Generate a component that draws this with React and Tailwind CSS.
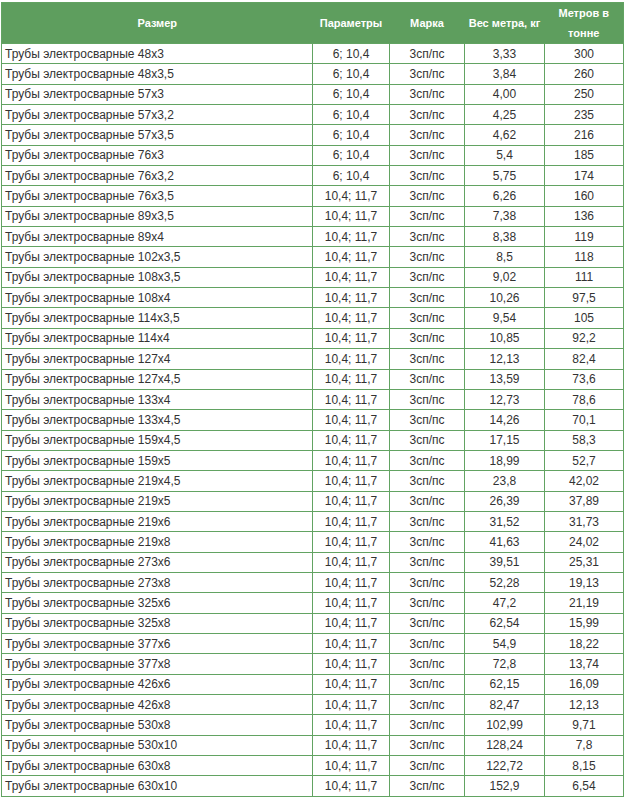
const rows = [
  ["48x3", "6; 10,4", "3,33", "300"],
  ["48x3,5", "6; 10,4", "3,84", "260"],
  ["57x3", "6; 10,4", "4,00", "250"],
  ["57x3,2", "6; 10,4", "4,25", "235"],
  ["57x3,5", "6; 10,4", "4,62", "216"],
  ["76x3", "6; 10,4", "5,4", "185"],
  ["76x3,2", "6; 10,4", "5,75", "174"],
  ["76x3,5", "10,4; 11,7", "6,26", "160"],
  ["89x3,5", "10,4; 11,7", "7,38", "136"],
  ["89x4", "10,4; 11,7", "8,38", "119"],
  ["102x3,5", "10,4; 11,7", "8,5", "118"],
  ["108x3,5", "10,4; 11,7", "9,02", "111"],
  ["108x4", "10,4; 11,7", "10,26", "97,5"],
  ["114x3,5", "10,4; 11,7", "9,54", "105"],
  ["114x4", "10,4; 11,7", "10,85", "92,2"],
  ["127x4", "10,4; 11,7", "12,13", "82,4"],
  ["127x4,5", "10,4; 11,7", "13,59", "73,6"],
  ["133x4", "10,4; 11,7", "12,73", "78,6"],
  ["133x4,5", "10,4; 11,7", "14,26", "70,1"],
  ["159x4,5", "10,4; 11,7", "17,15", "58,3"],
  ["159x5", "10,4; 11,7", "18,99", "52,7"],
  ["219x4,5", "10,4; 11,7", "23,8", "42,02"],
  ["219x5", "10,4; 11,7", "26,39", "37,89"],
  ["219x6", "10,4; 11,7", "31,52", "31,73"],
  ["219x8", "10,4; 11,7", "41,63", "24,02"],
  ["273x6", "10,4; 11,7", "39,51", "25,31"],
  ["273x8", "10,4; 11,7", "52,28", "19,13"],
  ["325x6", "10,4; 11,7", "47,2", "21,19"],
  ["325x8", "10,4; 11,7", "62,54", "15,99"],
  ["377x6", "10,4; 11,7", "54,9", "18,22"],
  ["377x8", "10,4; 11,7", "72,8", "13,74"],
  ["426x6", "10,4; 11,7", "62,15", "16,09"],
  ["426x8", "10,4; 11,7", "82,47", "12,13"],
  ["530x8", "10,4; 11,7", "102,99", "9,71"],
  ["530x10", "10,4; 11,7", "128,24", "7,8"],
  ["630x8", "10,4; 11,7", "122,72", "8,15"],
  ["630x10", "10,4; 11,7", "152,9", "6,54"],
];

export default function App() {
  return (
    <div className="bg-white pt-[2px] pl-[1px] font-['Liberation_Sans',Arial,sans-serif] text-[12px] text-[#333]">
      <table className="w-[622px] table-fixed border-collapse border border-[#62a362]">
        <colgroup>
          <col className="w-[311px]" />
          <col className="w-[77px]" />
          <col className="w-[75px]" />
          <col className="w-[80px]" />
          <col className="w-[79px]" />
        </colgroup>
        <thead>
          <tr className="h-[41px] bg-[#5e9e5e] text-[11px] font-bold leading-[20px] text-white">
            <th className="px-1 text-center">Размер</th>
            <th className="px-1 text-center">Параметры</th>
            <th className="px-1 text-center">Марка</th>
            <th className="px-1 text-center">Вес метра, кг</th>
            <th className="px-2 text-center">Метров в тонне</th>
          </tr>
        </thead>
        <tbody>
          {rows.map((r) => (
            <tr key={r[0]} className="h-[20.35px] leading-[14px]">
              <td className="border border-[#62a362] px-[3px] py-0">
                Трубы электросварные {r[0]}
              </td>
              <td className="border border-[#62a362] py-0 text-center">{r[1]}</td>
              <td className="border border-[#62a362] py-0 text-center">3сп/пс</td>
              <td className="border border-[#62a362] py-0 text-center">{r[2]}</td>
              <td className="border border-[#62a362] py-0 text-center">{r[3]}</td>
            </tr>
          ))}
        </tbody>
      </table>
    </div>
  );
}
